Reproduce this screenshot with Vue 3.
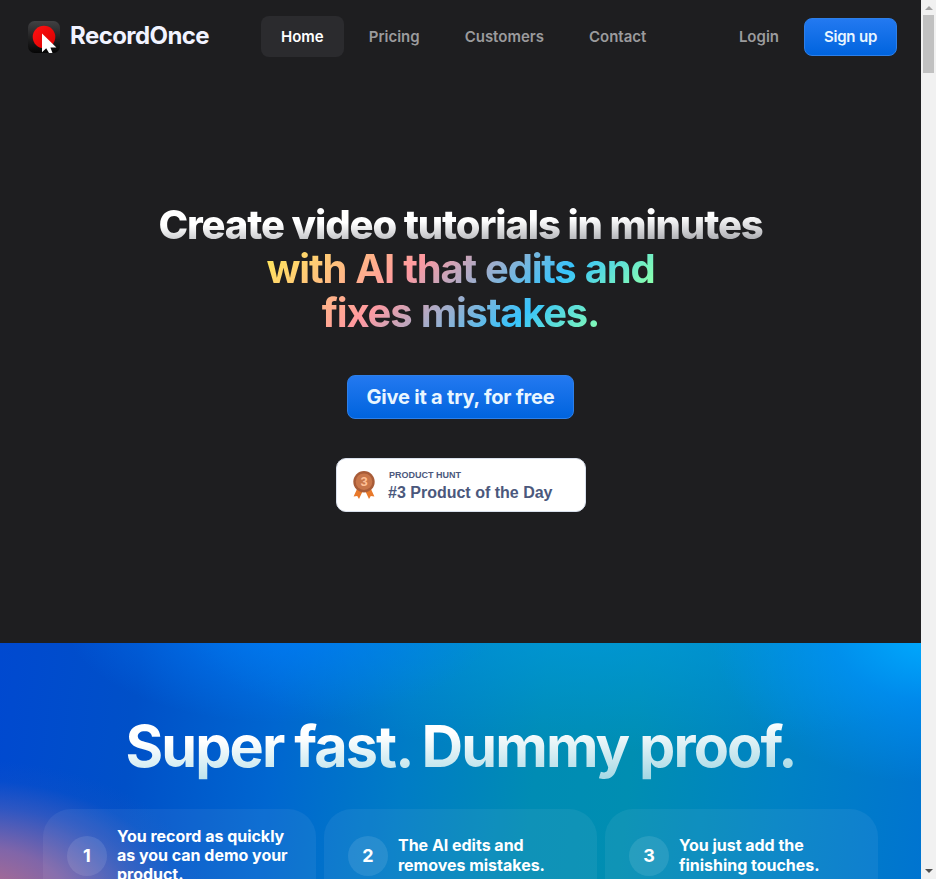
<script setup>
const links = ['Home', 'Pricing', 'Customers', 'Contact']
const steps = [
  ['You record as quickly', 'as you can demo your', 'product.'],
  ['The AI edits and', 'removes mistakes.'],
  ['You just add the', 'finishing touches.'],
]
</script>

<template>
  <div class="window">
    <div class="page">
      <header class="nav">
        <a class="brand">
          <svg class="logo" width="32" height="32" viewBox="0 0 32 32">
            <defs>
              <linearGradient id="tile" x1="0" y1="0" x2="0" y2="1">
                <stop offset="0" stop-color="#414143" />
                <stop offset="1" stop-color="#050505" />
              </linearGradient>
              <linearGradient id="dot" x1="0" y1="0" x2="1" y2="1">
                <stop offset="0" stop-color="#ff1212" />
                <stop offset="1" stop-color="#d90000" />
              </linearGradient>
            </defs>
            <rect width="32" height="32" rx="6.5" fill="url(#tile)" />
            <circle cx="16" cy="16" r="11.3" fill="url(#dot)" />
            <path d="M14 12.4V31.2L18.2 27.2L21 32H24.5L22.4 26.4H28.4Z" fill="#fff" />
          </svg>
          <span class="name">RecordOnce</span>
        </a>
        <nav class="links">
          <a v-for="(l, i) in links" :key="l" :class="['link', { active: i === 0 }]">{{ l }}</a>
        </nav>
        <div class="account">
          <a class="link login">Login</a>
          <a class="btn small">Sign up</a>
        </div>
      </header>

      <section class="hero">
        <h1>
          <span class="silver">Create video tutorials in minutes</span>
          <span class="rainbow">with AI that edits and<br />fixes mistakes.</span>
        </h1>
        <a class="btn large">Give it a try, for free</a>
        <a class="badge">
          <svg class="medal" width="22" height="28" viewBox="0 0 22 28">
            <path d="M4.5 17L0.6 25.5L4.2 25L6 28L10 19.5Z" fill="#e8792b" />
            <path d="M17.5 17L21.4 25.5L17.8 25L16 28L12 19.5Z" fill="#e8792b" />
            <circle cx="11" cy="10.7" r="10.7" fill="#a85c38" />
            <circle cx="11" cy="10.7" r="8.3" fill="#c8764a" />
            <text x="11" y="15.2" text-anchor="middle" font-family="Liberation Sans, sans-serif" font-size="13" font-weight="700" fill="#ffc095">3</text>
          </svg>
          <span class="award">
            <span class="source">PRODUCT HUNT</span>
            <span class="rank">#3 Product of the Day</span>
          </span>
        </a>
      </section>

      <section class="fast">
        <h2>Super fast. Dummy proof.</h2>
        <div class="steps">
          <article v-for="(s, i) in steps" :key="i" class="step">
            <span class="num">{{ i + 1 }}</span>
            <p :class="{ tall: s.length === 3 }"><span v-for="t in s" :key="t">{{ t }}</span></p>
          </article>
        </div>
      </section>
    </div>
    <div class="scrollbar">
      <i class="arrow up"></i>
      <i class="thumb"></i>
      <i class="arrow down"></i>
    </div>
  </div>
</template>

<style>
body { margin: 0; overflow: hidden; background: #1e1e20; }
</style>

<style scoped>
* { box-sizing: border-box; }
.window { width: 936px; height: 879px; display: flex; overflow: hidden; font-family: Inter, sans-serif; color: #fff; }
.page { width: 921px; height: 879px; background: #1e1e20; overflow: hidden; }

.nav { height: 73px; display: flex; align-items: flex-start; padding: 16px 24px 0 28px; }
.brand { display: flex; align-items: center; gap: 10px; width: 233px; height: 41px; }
.name { font-size: 24px; font-weight: 700; line-height: 28px; letter-spacing: -0.57px; color: #f1f3ff; padding-bottom: 2px; }
.links { display: flex; gap: 5px; }
.link { height: 41px; padding: 0 20px; line-height: 41px; border-radius: 8px; font-size: 15px; font-weight: 600; letter-spacing: 0; color: #9b9b9d; white-space: nowrap; }
.link.active { background: #2b2b2e; color: #fff; }
.account { margin-left: auto; display: flex; gap: 5px; }
.btn { display: block; text-align: center; white-space: nowrap; color: #e9f6ff; font-weight: 600; background: linear-gradient(#2379f0, #0064de); border: 1px solid #2d7fe8; border-radius: 8px; }
.small { width: 93px; height: 38px; margin-top: 2px; line-height: 36px; font-size: 15px; letter-spacing: -0.2px; }

.hero { height: 570px; display: flex; flex-direction: column; align-items: center; padding-top: 130px; }
h1 { margin: 0; display: flex; flex-direction: column; align-items: center; text-align: center; font-size: 40px; line-height: 44px; white-space: nowrap; }
.silver { font-weight: 800; letter-spacing: -1.14px; color: transparent; background: linear-gradient(179deg, #fff 42%, #a0a1a6 92%); background-clip: text; }
.rainbow { font-weight: 700; letter-spacing: -1.25px; word-spacing: 1.1px; color: transparent; background: linear-gradient(135deg, #ffe45e 3%, #ff99a0 35%, #38c3fb 68%, #88ffb0 88%); background-clip: text; }
.large { width: 227px; height: 44px; margin-top: 40px; font-size: 20px; line-height: 42px; font-weight: 700; letter-spacing: -0.2px; }
.badge { width: 250px; height: 54px; margin-top: 39px; display: flex; align-items: center; padding-left: 16px; gap: 13.5px; background: #fff; border: 1px solid #d9e0ec; border-radius: 10px; font-family: "Liberation Sans", Arial, sans-serif; font-weight: 700; color: #4b587c; }
.award { display: flex; flex-direction: column; padding-top: 3px; }
.source { font-size: 9px; line-height: 12px; padding: 0 0 0 1px; }
.rank { font-size: 16px; line-height: 23px; white-space: nowrap; }

.fast { height: 236px; display: flex; flex-direction: column; align-items: center; overflow: hidden;
  background:
    radial-gradient(ellipse 240px 145px at -25px 262px, rgba(205, 112, 130, .95) 0%, rgba(160, 108, 160, .8) 40%, rgba(100, 100, 180, .45) 68%, rgba(50, 90, 190, .12) 86%, rgba(0, 80, 200, 0) 100%),
    radial-gradient(ellipse 220px 150px at 931px -10px, #00acff 0%, rgba(0, 150, 255, .6) 45%, rgba(0, 140, 230, 0) 100%),
    radial-gradient(ellipse 220px 110px at 280px -30px, rgba(0, 125, 255, .8) 0%, rgba(0, 115, 250, 0) 100%),
    radial-gradient(ellipse 420px 130px at 600px -20px, rgba(0, 155, 228, .7) 0%, rgba(0, 150, 225, 0) 100%),
    linear-gradient(97deg, #0049d0 0%, #0050c8 15%, #0066d0 30%, #007cc6 44%, #008cb4 58%, #008eb2 68%, #0082c4 84%, #0074d0 100%);
}
h2 { margin: 69px 0 0; font-size: 57.6px; line-height: 68px; font-weight: 700; letter-spacing: -1.9px; word-spacing: -1px; white-space: nowrap; color: transparent; background: linear-gradient(178deg, #fff 35%, #a0d6e3 95%); background-clip: text; }
.steps { margin-top: 29px; width: 835px; display: grid; grid-template-columns: repeat(3, 1fr); gap: 8px; }
.step { height: 130px; border-radius: 28px; background: rgba(255, 255, 255, .06); display: flex; align-items: flex-start; gap: 10px; padding: 27px 16px 0 24px; }
.num { flex: none; width: 40px; height: 40px; border-radius: 50%; background: rgba(255, 255, 255, .1); text-align: center; line-height: 40px; font-size: 18px; font-weight: 700; }
.step p { margin: -1px 0 0; display: flex; flex-direction: column; font-size: 16px; line-height: 20px; font-weight: 700; letter-spacing: -0.02px; white-space: nowrap; }
.step p.tall { line-height: 19px; margin-top: -9px; }

.scrollbar { width: 15px; height: 879px; background: #f1f1f1; display: flex; flex-direction: column; align-items: center; }
.arrow { width: 0; height: 0; border: 4px solid transparent; }
.up { border-top: 0; border-bottom-color: #a3a3a3; margin-top: 6px; }
.thumb { width: 11px; height: 58px; margin-top: 5px; background: #c1c1c1; }
.down { border-bottom: 0; border-top-color: #505050; margin: auto 0 6px; }
</style>
